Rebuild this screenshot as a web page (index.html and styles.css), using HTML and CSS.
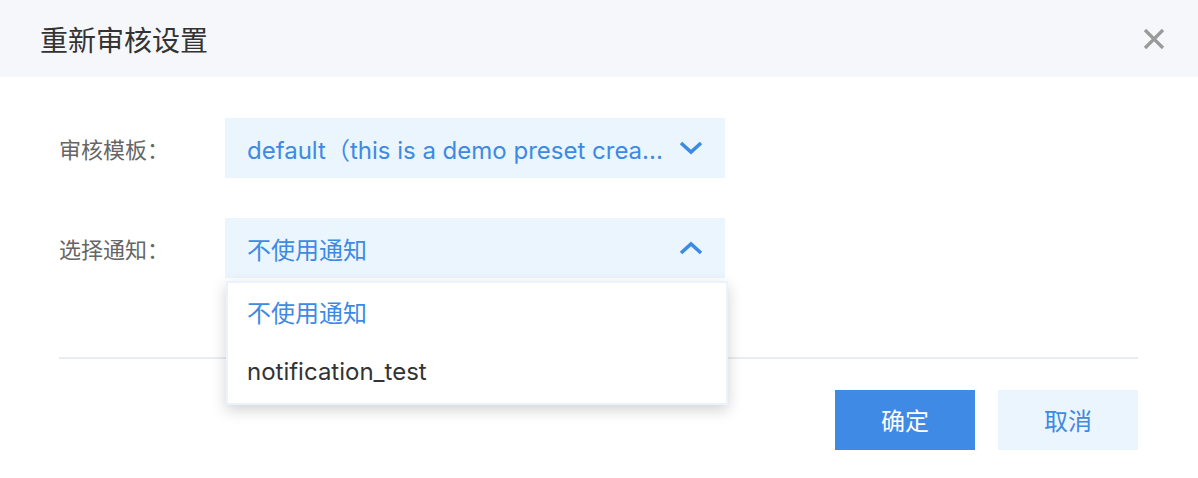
FILE: index.html
```html
<!DOCTYPE html>
<html lang="zh-CN">
<head>
<meta charset="utf-8">
<title>重新审核设置</title>
<link rel="stylesheet" href="styles.css">
</head>
<body>
<div class="dialog">
  <div class="header">
    <div class="title">重新审核设置</div>
    <svg class="close" width="22" height="22" viewBox="0 0 22 22"><path d="M2 2 L20 20 M20 2 L2 20" stroke="#9a9a9a" stroke-width="3.2" fill="none"/></svg>
  </div>
  <div class="body">
    <div class="row">
      <div class="label">审核模板：</div>
      <div class="select">
        <span class="value">default（this is a demo preset crea...</span>
        <svg class="chev" width="24" height="14" viewBox="0 0 24 14"><polyline points="2,2 12,11 22,2" stroke="#3d8ae5" stroke-width="3.6" fill="none"/></svg>
      </div>
    </div>
    <div class="row">
      <div class="label">选择通知：</div>
      <div class="select-wrap">
        <div class="select">
          <span class="value">不使用通知</span>
          <svg class="chev" width="24" height="14" viewBox="0 0 24 14"><polyline points="2,12 12,3 22,12" stroke="#3d8ae5" stroke-width="3.6" fill="none"/></svg>
        </div>
        <div class="menu">
          <div class="item active">不使用通知</div>
          <div class="item">notification_test</div>
        </div>
      </div>
    </div>
    <div class="divider"></div>
    <div class="actions">
      <button class="btn primary">确定</button>
      <button class="btn secondary">取消</button>
    </div>
  </div>
</div>
</body>
</html>
```
FILE: styles.css
```css
* { box-sizing: border-box; }
html, body { margin: 0; padding: 0; background: #fff; }
body {
  width: 1198px;
  height: 478px;
  font-family: Inter, "Noto Sans CJK SC", sans-serif;
  overflow: hidden;
}
.dialog { width: 1198px; height: 478px; }
.header {
  height: 77px;
  background: #f6f7fb;
  display: flex;
  align-items: center;
  justify-content: space-between;
  padding: 0 33px 0 40px;
}
.title {
  font-size: 28px;
  color: #333;
}
.close { display: block; }
.body {
  display: flex;
  flex-direction: column;
  padding: 41px 60px 0 59px;
}
.row {
  display: flex;
  align-items: center;
}
.row + .row { margin-top: 40px; }
.label {
  width: 166px;
  font-size: 22px;
  color: #666;
}
.select-wrap { position: relative; }
.select {
  width: 500px;
  height: 60px;
  background: #ebf5fd;
  display: flex;
  align-items: center;
  justify-content: space-between;
  padding: 0 22px 0 22px;
}
.value {
  font-size: 24px;
  color: #3d8ae5;
  white-space: nowrap;
}
.chev { display: block; }
.menu {
  position: absolute;
  left: 1px;
  top: 63px;
  width: 502px;
  background: #fff;
  border: 2px solid #e8f3fd;
  box-shadow: 0 5px 14px rgba(0, 0, 0, 0.18);
  z-index: 5;
}
.item {
  height: 60px;
  display: flex;
  align-items: center;
  padding-left: 19px;
  padding-bottom: 3px;
  font-size: 24px;
  color: #333;
}
.item.active { color: #3d8ae5; }
.divider {
  height: 2px;
  background: #e9edf2;
  margin-top: 79px;
}
.actions {
  display: flex;
  justify-content: flex-end;
  gap: 23px;
  margin-top: 31px;
}
.btn {
  width: 140px;
  height: 60px;
  border: none;
  font-family: inherit;
  font-size: 24px;
  padding: 0 0 2px;
}
.primary { background: #3f8ae5; color: #fff; }
.secondary { background: #ebf5fd; color: #3d8ae5; }
```
